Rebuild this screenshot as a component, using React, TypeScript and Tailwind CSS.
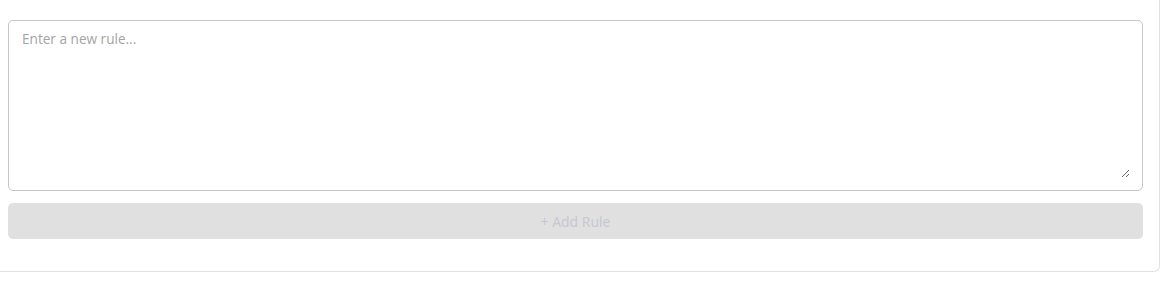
import React from "react";

export default function App() {
  return (
    <div className="h-[290px] w-[1170px] overflow-hidden bg-white" style={{ fontFamily: "'Open Sans', Lato, sans-serif" }}>
      <div className="ml-[-9px] w-[1169px] rounded-b-[6px] border border-t-0 border-[#e2e2e2] bg-white px-4 pt-5 pb-8">
        <div className="h-[171px] w-full rounded-[5px] border border-[#c6c6c6] pt-2 pr-3 pb-3 pl-[13px]">
          <textarea
            placeholder="Enter a new rule..."
            className="block h-full w-full resize-y border-0 p-0 text-[13.6px] leading-5 text-[#333] outline-none placeholder:text-[#a4a4a6]"
          />
        </div>
        <button
          disabled
          className="mt-3 flex h-9 w-full items-center justify-center rounded-[5px] bg-[#e0e0e0] text-[14px] font-medium text-[#c4c7cf]"
        >
          + Add Rule
        </button>
      </div>
    </div>
  );
}
